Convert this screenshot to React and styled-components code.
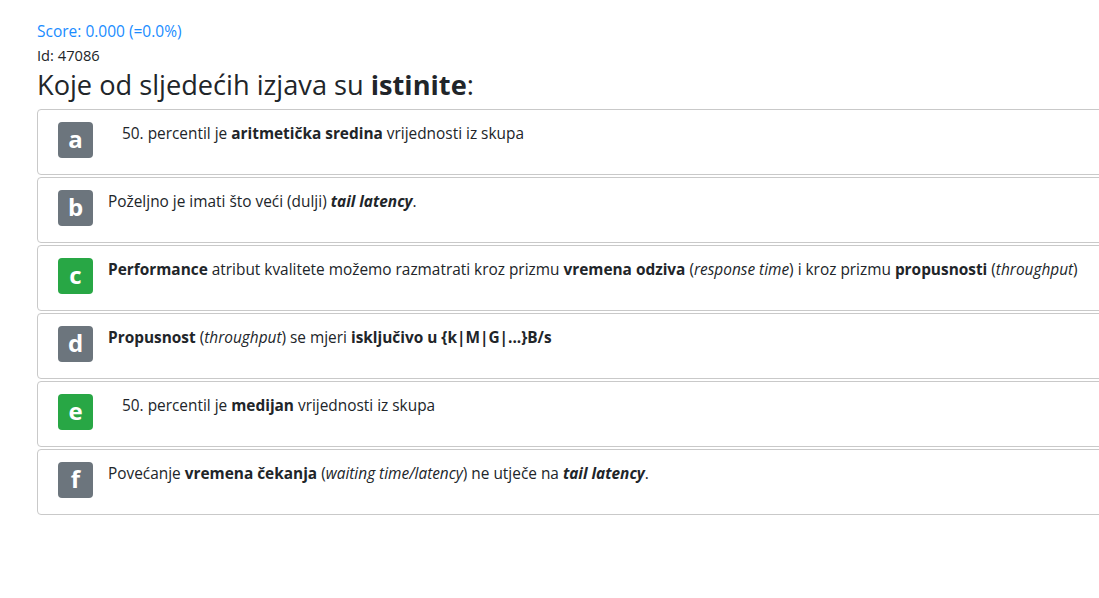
import React from "react";
import styled, { createGlobalStyle } from "styled-components";

const Global = createGlobalStyle`
  html, body { margin: 0; padding: 0; background: #fff; overflow: hidden; }
  body {
    font-family: "Open Sans", "Noto Sans", sans-serif;
    color: #212529;
  }
`;

const Page = styled.div`
  padding: 20px 0 0 37px;
  width: 1100px;
`;

const Score = styled.div`
  color: #1a8cff;
  font-size: 15.5px;
  line-height: 22px;
`;

const Id = styled.div`
  font-size: 14.7px;
  line-height: 26px;
`;

const Heading = styled.h2`
  margin: 0 0 7px 0;
  font-size: 27.2px;
  font-weight: 400;
  line-height: 34px;
  b { font-weight: 700; }
`;

const Card = styled.div`
  box-sizing: border-box;
  width: 1080px;
  height: 66px;
  margin-bottom: 2px;
  border: 1px solid #c9c9c9;
  border-radius: 4px;
  padding: 12px 20px;
  display: flex;
  align-items: flex-start;
  gap: 15px;
`;

const Badge = styled.div`
  flex: none;
  width: 35px;
  height: 36px;
  border-radius: 4px;
  background: ${(p) => (p.$correct ? "#28a745" : "#6c757d")};
  color: #fff;
  font-size: 24px;
  font-weight: 700;
  display: flex;
  align-items: center;
  justify-content: center;
  line-height: 1;
  padding-bottom: 3px;
  box-sizing: border-box;
`;

const Text = styled.div`
  font-size: 15.4px;
  line-height: 22px;
  padding-top: 1px;
  padding-left: ${(p) => (p.$indent ? "14px" : "0")};
  white-space: nowrap;
  b { font-weight: 700; }
  i { font-style: italic; }
`;

const items = [
  {
    l: "a",
    ok: false,
    indent: true,
    t: (
      <>
        50. percentil je <b>aritmetička sredina</b> vrijednosti iz skupa
      </>
    ),
  },
  {
    l: "b",
    ok: false,
    t: (
      <>
        Poželjno je imati što veći (dulji) <b><i>tail latency</i></b>.
      </>
    ),
  },
  {
    l: "c",
    ok: true,
    t: (
      <>
        <b>Performance</b> atribut kvalitete možemo razmatrati kroz prizmu{" "}
        <b>vremena odziva</b> (<i>response time</i>) i kroz prizmu{" "}
        <b>propusnosti</b> (<i>throughput</i>)
      </>
    ),
  },
  {
    l: "d",
    ok: false,
    t: (
      <>
        <b>Propusnost</b> (<i>throughput</i>) se mjeri <b>isključivo u {"{k|M|G|...}B/s"}</b>
      </>
    ),
  },
  {
    l: "e",
    ok: true,
    indent: true,
    t: (
      <>
        50. percentil je <b>medijan</b> vrijednosti iz skupa
      </>
    ),
  },
  {
    l: "f",
    ok: false,
    t: (
      <>
        Povećanje <b>vremena čekanja</b> (<i>waiting time/latency</i>) ne utječe na{" "}
        <b><i>tail latency</i></b>.
      </>
    ),
  },
];

export default function App() {
  return (
    <>
      <Global />
      <Page>
        <Score>Score: 0.000 (=0.0%)</Score>
        <Id>Id: 47086</Id>
        <Heading>
          Koje od sljedećih izjava su <b>istinite</b>:
        </Heading>
        {items.map((it) => (
          <Card key={it.l}>
            <Badge $correct={it.ok}>{it.l}</Badge>
            <Text $indent={it.indent}>{it.t}</Text>
          </Card>
        ))}
      </Page>
    </>
  );
}
